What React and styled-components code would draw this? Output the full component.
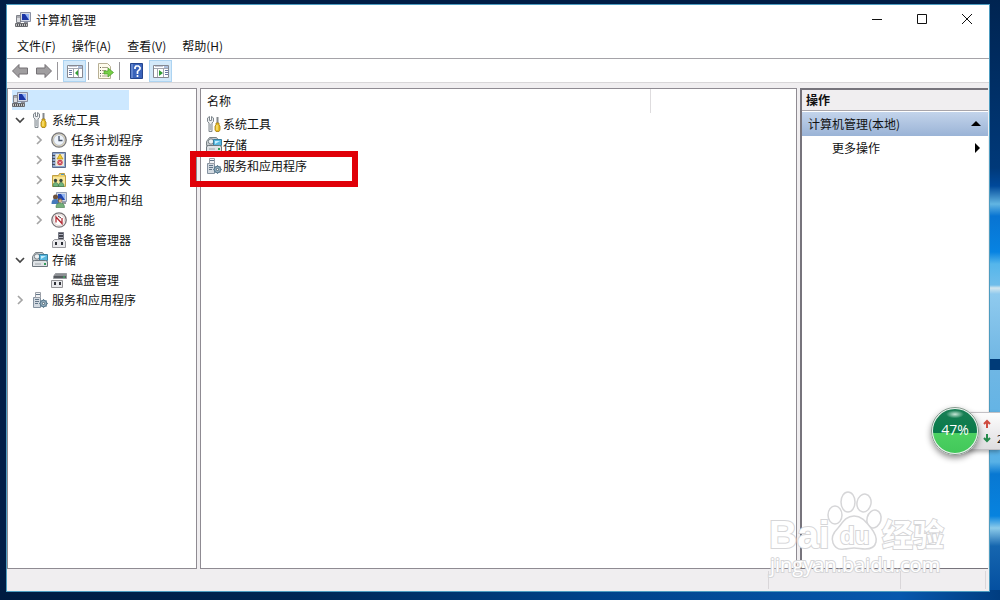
import React from 'react';
import styled, { createGlobalStyle } from 'styled-components';

const GlobalStyle = createGlobalStyle`
  * {
    box-sizing: border-box;
  }

  body {
    margin: 0;
    overflow: hidden;
    font-family: 'Noto Sans CJK SC', sans-serif;
    font-size: 12px;
    line-height: 20px;
    color: #111;
  }

  button {
    font: inherit;
    color: inherit;
    border: 0;
    padding: 0;
    background: none;
  }

  ul {
    list-style: none;
    margin: 0;
    padding: 0;
  }

  svg {
    flex: none;
  }
`;

const Desktop = styled.div`
  position: relative;
  display: flex;
  min-height: 100vh;
  padding: 4px 10px 8px 6px;
  background: #001d46;
  overflow: hidden;
`;

const Wallpaper = styled.svg`
  position: absolute;
  inset: 0;
  width: 100%;
  height: 100%;
`;

const Window = styled.main`
  position: relative;
  flex: 1;
  min-width: 0;
  display: flex;
  flex-direction: column;
  background: #f0eef0;
  border: 1px solid #4d9cc0;
`;

const TitleBar = styled.header`
  display: flex;
  align-items: center;
  height: 29px;
  padding-left: 8px;
  background: #fff;
`;

const Title = styled.h1`
  flex: 1;
  margin: 0 0 0 5px;
  font-size: 12px;
  font-weight: normal;
`;

const WindowButton = styled.button`
  display: flex;
  align-items: center;
  justify-content: center;
  width: 45px;
  height: 29px;
`;

const MenuBar = styled.nav`
  display: flex;
  height: 25px;
  padding: 0 0 1px 2px;
  background: #fff;
  border-bottom: 1px solid #a5a3a8;
`;

const MenuItem = styled.button`
  padding: 0 8px;
`;

const Toolbar = styled.div`
  display: flex;
  align-items: center;
  gap: 1px;
  height: 24px;
  padding-left: 1px;
  background: #fff;
  border-bottom: 1px solid #d8d6d8;
`;

const ToolButton = styled.button`
  display: flex;
  align-items: center;
  justify-content: center;
  width: 23px;
  height: 22px;
  background: ${({ $active }) => ($active ? '#d3e9fa' : 'none')};
  border: 1px solid ${({ $active }) => ($active ? '#add4f2' : 'transparent')};
`;

const Separator = styled.span`
  width: 1px;
  height: 18px;
  margin: 0 4px 0 1px;
  background: #98969a;
`;

const Panes = styled.div`
  flex: 1;
  display: grid;
  grid-template-columns: 190px 1fr 188px;
  gap: 3px;
  padding: 5px 1px 0 0;
`;

const Pane = styled.section`
  min-width: 0;
  background: #fff;
  border: 1px solid #8f8b92;
`;

const ActionPane = styled(Pane)`
  border-width: 2px 0 1px 2px;
  border-color: #77747c;
`;

const Tree = styled.ul`
  padding: 1px 4px;
`;

const TreeRow = styled.li`
  display: flex;
  align-items: center;
  height: 20px;
  padding-left: ${({ $level }) => $level * 19}px;
`;

const SelectedRow = styled.li`
  display: flex;
  align-items: center;
  width: 117px;
  height: 20px;
  background: #cde8ff;
`;

const Toggle = styled.button`
  display: flex;
  align-items: center;
  justify-content: center;
  width: 16px;
  height: 20px;
`;

const TreeLabel = styled.span`
  margin-left: 4px;
`;

const IconSlot = styled.span`
  display: flex;
  justify-content: center;
  width: 16px;
  margin-left: 4px;
`;

const ListTable = styled.table`
  width: 100%;
  border-collapse: collapse;

  th {
    height: 24px;
    padding: 0 6px;
    font-weight: normal;
    text-align: left;
  }

  th:first-child {
    width: 449px;
    border-right: 1px solid #dedcde;
  }

  td {
    height: 21px;
    padding: 0 5px;
  }
`;

const ListName = styled.div`
  position: relative;
  display: flex;
  align-items: center;
  gap: 1px;
  height: 21px;
`;

const Highlight = styled.span`
  position: absolute;
  left: -16px;
  top: -4px;
  width: 168px;
  height: 36px;
  border: 6px solid #e00008;
`;

const ActionHeader = styled.h2`
  height: 21px;
  margin: 0 0 1px;
  padding-left: 4px;
  font-size: 12px;
  line-height: 20px;
  background: #f0eef0;
  border-bottom: 1px solid #a8a5aa;
`;

const ActionGroup = styled.button`
  display: flex;
  align-items: center;
  justify-content: space-between;
  width: 100%;
  height: 24px;
  padding: 0 6px;
  background: linear-gradient(#c3d4eb, #9ab3d6);
`;

const ActionItem = styled(ActionGroup)`
  padding-left: 30px;
  background: none;
`;

const StatusBar = styled.footer`
  display: flex;
  justify-content: flex-end;
  height: 22px;
  padding: 2px 3px;
`;

const StatusCell = styled.span`
  width: ${({ $width }) => $width}px;
  border-left: 1px solid #d9d6d9;

  &:last-child {
    border-right: 1px solid #d9d6d9;
  }
`;

const Meter = styled.aside`
  position: absolute;
  top: 407px;
  right: 0;
  display: flex;
  align-items: center;
`;

const MeterBall = styled.div`
  position: relative;
  display: flex;
  align-items: center;
  justify-content: center;
  width: 48px;
  height: 48px;
  padding-bottom: 2px;
  border: 2px solid #e9f5ee;
  border-radius: 50%;
  outline: 1px solid #88998f;
  outline-offset: -1px;
  color: #fff;
  font-family: 'Open Sans', sans-serif;
  font-size: 14px;
  background: radial-gradient(9px 4px at 50% 12%, #c5e6d6 0, transparent 100%),
    linear-gradient(#1a7f56 0, #087a49 54%, #4dd262 54%, #42c75a 100%);
  box-shadow: 0 3px 6px rgba(0, 0, 0, 0.45);
`;

const MeterPanel = styled.div`
  display: flex;
  align-items: center;
  gap: 6px;
  width: 45px;
  height: 38px;
  margin-left: -24px;
  padding-left: 27px;
  overflow: hidden;
  background: linear-gradient(#fdfdfd, #dfdde0);
  border: 1px solid #c3c1c5;
  border-right: 0;
  box-shadow: 0 2px 4px rgba(0, 0, 0, 0.3);
`;

const MeterValue = styled.span`
  padding-top: 14px;
  font-size: 11px;
`;

const Watermark = styled.svg`
  position: absolute;
  right: 50px;
  bottom: 20px;
`;

const icons = {
  computer: (
    <>
      <path d="M5.5.5h10v9h-10z" fill="#d5dae6" stroke="#8b91a3" />
      <path d="M7 2h7v6H7z" fill="#1a35a6" />
      <path d="M10 2h4v6z" fill="#8fb0f4" />
      <path d="M1.5 3.5h4v7h-4z" fill="#dcdde0" stroke="#80838a" />
      <path d="M2 5h3" stroke="#7a7d84" />
      <path d="M9 10h4v2H9z" fill="#8b8f98" />
      <path d="M.5 11.5h12v3H.5z" fill="#c4c5c4" stroke="#6b6c70" />
      <path d="M2.5 12v2m2-2v2m2-2v2m2-2v2m2-2v2" stroke="#535459" />
    </>
  ),
  tools: (
    <>
      <path d="M3.5.5v4h2v-4l2 1.5v3.500L6 7v8.500H3V7L1.500 5.500V2z" fill="#e9ebed" stroke="#80888e" />
      <path d="M4.5 8v6" stroke="#b3babf" />
      <path d="M11.5 1v6" stroke="#85898c" strokeWidth="2" />
      <path d="M10 7h3v2l1 1v4l-1 1.5h-3L9 14v-4l1-1z" fill="#e8bf26" stroke="#a57c12" strokeWidth=".8" />
      <path d="M11 9v5" stroke="#fff0a0" />
    </>
  ),
  clock: (
    <>
      <circle cx="8" cy="8" r="7.2" fill="#e4dcc0" stroke="#77777c" strokeWidth="1.3" />
      <circle cx="8" cy="8" r="5.4" fill="#eef4fc" stroke="#b1b2b8" strokeWidth=".8" />
      <path d="M8 4v4.5h3.5" fill="none" stroke="#46536a" strokeWidth="1.3" />
    </>
  ),
  events: (
    <>
      <path d="M1.5.5h13v15h-13z" fill="#8da6d0" stroke="#5c6c8c" />
      <path d="M4.5 2H13v12H4.5z" fill="#f1ebd7" />
      <path d="m9 2 3 5H6z" fill="#f2cc27" stroke="#a38017" strokeWidth=".6" />
      <circle cx="9" cy="10.5" r="2.7" fill="#c94051" />
      <path d="m8 9.5 2 2m0-2-2 2" stroke="#fff" strokeWidth=".8" />
      <path d="M1 3.5h3M1 6.5h3M1 9.5h3M1 12.5h3" stroke="#444c5d" />
    </>
  ),
  folder: (
    <>
      <path d="M1.5 3.5h6l1-2h5v2h1v11h-13z" fill="#eed06b" stroke="#bf9f45" />
      <path d="M2 5h12v9H2z" fill="#f9e79c" />
      <path d="M10 2.5h3" stroke="#4c97c8" />
      <circle cx="4.5" cy="8.5" r="1.7" fill="#3b4a40" />
      <circle cx="10" cy="8.5" r="1.7" fill="#3b4a40" />
      <path d="M2 14.5c0-3 1-4 2.5-4s3 1 3 4zm5.5 0c0-3 1-4 2.5-4s3 1 3 4z" fill="#6fb37d" stroke="#3c7850" strokeWidth=".7" />
    </>
  ),
  users: (
    <>
      <path d="M5.5.5h10v9h-10z" fill="#d0d8e6" stroke="#929eb5" />
      <path d="M7 2h7v6H7z" fill="#2145ae" />
      <path d="M10 2h4v6z" fill="#92b5f2" />
      <path d="M11 10h4v2h-4z" fill="#92969c" />
      <circle cx="4.5" cy="5" r="2.5" fill="#6d513b" />
      <path d="M.5 12c0-4 1.5-5 4-5s4 1 4 5z" fill="#4679bb" />
      <circle cx="9" cy="8.5" r="2.3" fill="#7d6246" />
      <circle cx="9.3" cy="9" r="1.5" fill="#e0b997" />
      <path d="M5 15.5c0-4 2-4.5 4-4.5s4.5.5 4.5 4.5z" fill="#74b07a" stroke="#41784b" strokeWidth=".6" />
    </>
  ),
  performance: (
    <>
      <circle cx="8" cy="8" r="7.2" fill="#fbf7f4" stroke="#777276" strokeWidth="1.3" />
      <circle cx="8" cy="8" r="5.5" fill="#fff" stroke="#cdbdbb" strokeWidth=".7" />
      <path d="M5 10.5V5l6 6.5V6" fill="none" stroke="#b22a34" strokeWidth="1.3" />
      <path d="m7 4 3 2" stroke="#51363a" />
    </>
  ),
  devices: (
    <>
      <path d="M7.5.5h5v7h-5z" fill="#43444d" stroke="#777984" />
      <path d="M8 2.5h4M8 5.5h4" stroke="#aeb0bc" />
      <path d="m1.5 9.5 2-2h9l2 2v6h-13z" fill="#e9e9ec" stroke="#98989d" />
      <path d="M5 10v3m6-3v3" stroke="#292c34" strokeWidth="2" />
    </>
  ),
  storage: (
    <>
      <path d="m.5 4.500 3-4h7l3 4v4H.5z" fill="#c8cdd0" stroke="#7a8387" />
      <circle cx="5" cy="4.5" r="2.7" fill="#edf1f3" stroke="#788187" />
      <path d="M7.5 2.5h8v6h-8z" fill="#57b7df" stroke="#397e9d" />
      <path d="M9 4h5L9 7z" fill="#c4efff" />
      <path d="m.5 9.500 2-1h11l2 1v5H.5z" fill="#dfe3e6" stroke="#6d767d" />
      <path d="M3 12h6" stroke="#9ea6ac" />
      <path d="M12 12h2" stroke="#319b59" strokeWidth="2" />
    </>
  ),
  disk: (
    <>
      <path d="m2.5 4.500 2-3h11v5h-13z" fill="#565a5f" stroke="#999ca0" />
      <path d="M4 3h11" stroke="#c2c4c8" />
      <path d="M12 5h2" stroke="#3fca68" />
      <path d="M.5 8.5h11v7H.5z" fill="#e9e9ec" stroke="#939396" />
      <path d="M4 10v3m5-3v3" stroke="#303238" strokeWidth="2" />
    </>
  ),
  services: (
    <>
      <path d="M1.5 5.5h7v10h-7z" fill="#d3dae1" stroke="#8592a0" />
      <path d="M3.5.5h5v5h-5z" fill="#f2f3f5" stroke="#9a9fa7" />
      <path d="M4 2.5h4M3 7.5h4M3 9.5h4M3 11.5h3" stroke="#637688" />
      <circle cx="11.5" cy="11.5" r="3" fill="#c9e0ee" stroke="#5b7b90" strokeWidth="1.5" />
      <path d="M11.5 7v2m0 5v2M7 11.5h2m5 0h2M8.500 8.500 10 10m3 3 1.500 1.500m0-6L13 10m-3 3-1.500 1.500" stroke="#6a899b" />
      <circle cx="11.5" cy="11.5" r="1.2" fill="#fff" stroke="#395361" />
    </>
  ),
  back: <path d="M.5 8 7 1.500V5h8.500v6H7v3.500z" fill="#a09ea0" stroke="#747175" />,
  forward: <path d="M15.500 8 9 1.500V5H.5v6H9v3.500z" fill="#a09ea0" stroke="#747175" />,
  treeView: (
    <>
      <path d="M.5 2.5h15v12H.5z" fill="#fff" stroke="#868891" />
      <path d="M1 5.5h14M6.5 6v8m5-8v8" stroke="#a3a6b0" />
      <path d="M2 3.5h8" stroke="#c5cad8" />
      <path d="M11 4h4" stroke="#5b7fb8" />
      <path d="M2 7.5h3M2 9.5h3M2 11.5h3" stroke="#6878a4" />
      <path d="m11 7-3 3 3 3z" fill="#329d35" />
    </>
  ),
  exportList: (
    <>
      <path d="M.5.5h9l3 3v12H.5z" fill="#fffced" stroke="#b8b095" />
      <path d="M2 4.5h1M2 7.5h1M2 10.5h1M2 13h1" stroke="#555" />
      <path d="M4 4.5h6M4 7.5h4M4 10.5h3M4 13h6" stroke="#aaa38c" />
      <path d="M6 8h4V5l5.500 4.500L10 14v-3H6z" fill="#77cf46" stroke="#459c27" strokeWidth=".7" />
    </>
  ),
  help: (
    <>
      <path d="M1.5.5h12v15h-12z" fill="#3963bb" stroke="#24458e" />
      <path d="M3 1v14" stroke="#8fabe2" />
      <path d="M6 6V4.500L7 3h2.500L11 4.500V6L8.500 8.500V11m0 1v2" fill="none" stroke="#fff" strokeWidth="1.7" />
    </>
  ),
  actionView: (
    <>
      <path d="M.5 2.5h15v12H.5z" fill="#fff" stroke="#868891" />
      <path d="M1 5.5h14M4.5 6v8m6-8v8" stroke="#a3a6b0" />
      <path d="M2 3.5h8" stroke="#c5cad8" />
      <path d="M11 4h4" stroke="#5b7fb8" />
      <path d="M12 7.5h3m-3 2h3m-3 2h3" stroke="#6878a4" />
      <path d="m6 7 4 3-4 3z" fill="#329d35" />
    </>
  ),
};

function Icon({ name }) {
  return (
    <svg width="16" height="16" viewBox="0 0 16 16" aria-hidden="true">
      {icons[name]}
    </svg>
  );
}

function Chevron({ open }) {
  return (
    <svg width="10" height="10" viewBox="0 0 10 10" fill="none" aria-hidden="true">
      {open ? (
        <path d="m1 3 4 4 4-4" stroke="#444" strokeWidth="1.7" />
      ) : (
        <path d="m3 1 4 4-4 4" stroke="#a5a5a5" strokeWidth="1.7" />
      )}
    </svg>
  );
}

const menus = ['文件(F)', '操作(A)', '查看(V)', '帮助(H)'];

const tree = [
  { label: '系统工具', icon: 'tools', level: 0, open: true, toggle: true },
  { label: '任务计划程序', icon: 'clock', level: 1, toggle: true },
  { label: '事件查看器', icon: 'events', level: 1, toggle: true },
  { label: '共享文件夹', icon: 'folder', level: 1, toggle: true },
  { label: '本地用户和组', icon: 'users', level: 1, toggle: true },
  { label: '性能', icon: 'performance', level: 1, toggle: true },
  { label: '设备管理器', icon: 'devices', level: 1 },
  { label: '存储', icon: 'storage', level: 0, open: true, toggle: true },
  { label: '磁盘管理', icon: 'disk', level: 1 },
  { label: '服务和应用程序', icon: 'services', level: 0, toggle: true },
];

const list = [
  { label: '系统工具', icon: 'tools' },
  { label: '存储', icon: 'storage' },
  { label: '服务和应用程序', icon: 'services', marked: true },
];

function DesktopBackground() {
  return (
    <Wallpaper viewBox="0 0 1000 600" preserveAspectRatio="none" aria-hidden="true">
      <defs>
        <linearGradient id="side" x2="0" y2="1">
          <stop offset="0" stopColor="#002451" />
          <stop offset=".28" stopColor="#003979" />
          <stop offset=".31" stopColor="#00499a" />
          <stop offset=".34" stopColor="#62b5e2" />
          <stop offset=".36" stopColor="#0874d2" />
          <stop offset=".42" stopColor="#0783e2" />
          <stop offset=".44" stopColor="#55b6eb" />
          <stop offset=".475" stopColor="#6fbdea" />
          <stop offset=".48" stopColor="#d3e6ee" />
          <stop offset=".49" stopColor="#8fcaee" />
          <stop offset=".6" stopColor="#71b7e4" />
          <stop offset=".77" stopColor="#58b1e6" />
          <stop offset=".79" stopColor="#0878d2" />
          <stop offset=".86" stopColor="#0783df" />
          <stop offset=".88" stopColor="#8ccbea" />
          <stop offset=".91" stopColor="#1666af" />
          <stop offset="1" stopColor="#004b9d" />
        </linearGradient>
        <linearGradient id="floor">
          <stop offset="0" stopColor="#001b41" />
          <stop offset=".3" stopColor="#002653" />
          <stop offset=".6" stopColor="#00438b" />
          <stop offset=".9" stopColor="#0758ad" />
          <stop offset="1" stopColor="#003d80" />
        </linearGradient>
      </defs>
      <path d="M0 0h1000v600H0z" fill="#001d46" />
      <path d="M980 0h20v600h-20z" fill="url(#side)" />
      <path d="M980 359h20v11h-20z" fill="#003b78" />
      <path d="M0 590h1000v10H0z" fill="url(#floor)" />
    </Wallpaper>
  );
}

function BaiduMark() {
  return (
    <Watermark width="184" height="92" viewBox="0 0 184 92" fill="#fff" stroke="#d6d6d8" aria-hidden="true">
      <g strokeWidth="1.5">
        <ellipse cx="69" cy="27" rx="7" ry="9" />
        <ellipse cx="82" cy="14" rx="7" ry="10" />
        <ellipse cx="98" cy="15" rx="7" ry="9" transform="rotate(12 98 15)" />
        <ellipse cx="108" cy="31" rx="7" ry="9" transform="rotate(15 108 31)" />
        <path d="M88 28c-8 0-11 6-16 12-5 5-7 10-5 15s6 7 11 6c4 0 6-1 10-1s7 1 11 1c6 0 10-2 11-7s-1-9-5-14c-5-6-9-12-17-12z" />
      </g>
      <g strokeWidth="2" paintOrder="stroke">
        <text x="3" y="60" fontFamily="Liberation Sans, sans-serif" fontWeight="bold" fontSize="39">Bai</text>
        <text x="74" y="56" fontFamily="Liberation Sans, sans-serif" fontWeight="bold" fontSize="24">du</text>
        <text x="116" y="58" fontFamily="Noto Sans CJK SC, sans-serif" fontWeight="bold" fontSize="31">经验</text>
        <text x="4" y="84" fontFamily="Open Sans, sans-serif" fontWeight="500" fontSize="20">jingyan.baidu.com</text>
      </g>
    </Watermark>
  );
}

function App() {
  return (
    <>
      <GlobalStyle />
      <Desktop>
        <DesktopBackground />
        <Window>
          <TitleBar>
            <Icon name="computer" />
            <Title>计算机管理</Title>
            <WindowButton aria-label="最小化">
              <svg width="12" height="12" viewBox="0 0 12 12" stroke="#111"><path d="M1 5.5h10" /></svg>
            </WindowButton>
            <WindowButton aria-label="最大化">
              <svg width="12" height="12" viewBox="0 0 12 12" fill="none" stroke="#111"><path d="M1.5.5h9v9h-9z" /></svg>
            </WindowButton>
            <WindowButton aria-label="关闭">
              <svg width="12" height="12" viewBox="0 0 12 12" stroke="#111"><path d="m1 0 10 10M11 0 1 10" /></svg>
            </WindowButton>
          </TitleBar>
          <MenuBar>
            {menus.map((menu) => <MenuItem key={menu}>{menu}</MenuItem>)}
          </MenuBar>
          <Toolbar>
            <ToolButton aria-label="后退"><Icon name="back" /></ToolButton>
            <ToolButton aria-label="前进"><Icon name="forward" /></ToolButton>
            <Separator />
            <ToolButton $active aria-label="控制台树"><Icon name="treeView" /></ToolButton>
            <Separator />
            <ToolButton aria-label="导出列表"><Icon name="exportList" /></ToolButton>
            <Separator />
            <ToolButton aria-label="帮助"><Icon name="help" /></ToolButton>
            <ToolButton $active aria-label="操作窗格"><Icon name="actionView" /></ToolButton>
          </Toolbar>
          <Panes>
            <Pane>
              <Tree>
                <SelectedRow><Icon name="computer" /></SelectedRow>
                {tree.map((item) => (
                  <TreeRow key={item.label} $level={item.level}>
                    <Toggle as={item.toggle ? 'button' : 'span'} aria-label={item.toggle ? item.label : undefined}>
                      {item.toggle && <Chevron open={item.open} />}
                    </Toggle>
                    <IconSlot><Icon name={item.icon} /></IconSlot>
                    <TreeLabel>{item.label}</TreeLabel>
                  </TreeRow>
                ))}
              </Tree>
            </Pane>
            <Pane>
              <ListTable>
                <thead>
                  <tr><th>名称</th><th aria-label="说明" /></tr>
                </thead>
                <tbody>
                  {list.map((item) => (
                    <tr key={item.label}>
                      <td colSpan="2">
                        <ListName>
                          <Icon name={item.icon} />
                          {item.label}
                          {item.marked && <Highlight />}
                        </ListName>
                      </td>
                    </tr>
                  ))}
                </tbody>
              </ListTable>
            </Pane>
            <ActionPane>
              <ActionHeader>操作</ActionHeader>
              <ActionGroup>
                计算机管理(本地)
                <svg width="12" height="8" viewBox="0 0 12 8" aria-hidden="true"><path d="m6 1 5 5H1z" /></svg>
              </ActionGroup>
              <ActionItem>
                更多操作
                <svg width="10" height="10" viewBox="0 0 10 10" aria-hidden="true"><path d="m3 0 5 5-5 5z" /></svg>
              </ActionItem>
            </ActionPane>
          </Panes>
          <StatusBar>
            <StatusCell $width={132} />
            <StatusCell $width={86} />
          </StatusBar>
        </Window>
        <BaiduMark />
        <Meter>
          <MeterBall>47%</MeterBall>
          <MeterPanel>
            <svg width="8" height="26" viewBox="0 0 8 26" fill="none" strokeWidth="2" aria-hidden="true">
              <path d="M4 10V3M1 6l3-3 3 3" stroke="#cf4c40" />
              <path d="M4 16v7M1 20l3 3 3-3" stroke="#268a4c" />
            </svg>
            <MeterValue>2</MeterValue>
          </MeterPanel>
        </Meter>
      </Desktop>
    </>
  );
}

export default App;
